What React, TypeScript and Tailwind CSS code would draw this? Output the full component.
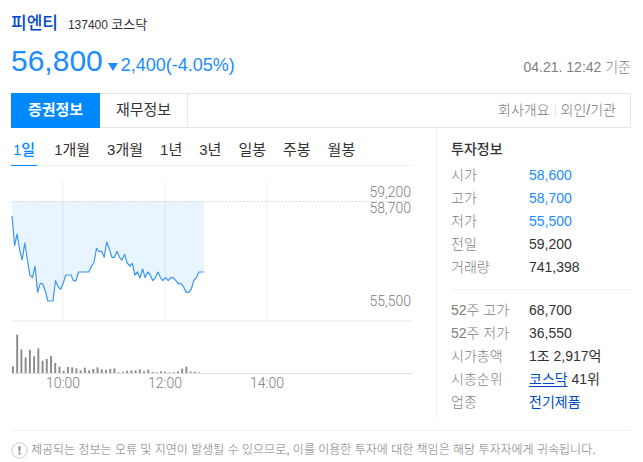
import React, { useState } from "react";

const PERIODS = ["1일", "1개월", "3개월", "1년", "3년", "일봉", "주봉", "월봉"];

// Line heights in a third of a viewBox unit, one point every 3 minutes from 09:00.
const LINE = [
  138, 227, 192, 240, 270, 219, 270, 315, 323, 289, 367, 341, 341, 364, 393, 393, 393, 332, 350,
  358, 340, 315, 315, 315, 332, 332, 306, 306, 306, 306, 306, 289, 279, 235, 244, 244, 262, 216,
  236, 262, 262, 244, 262, 270, 253, 279, 288, 280, 315, 306, 324, 297, 323, 306, 315, 332, 323,
  306, 323, 332, 323, 332, 323, 323, 332, 341, 341, 350, 367, 367, 358, 332, 323, 306, 306, 306,
];

// Traded volume, one bar every 5 minutes.
const VOLUME = [
  20, 115, 71, 47, 70, 50, 74, 37, 42, 51, 30, 19, 7, 18, 17, 14, 8, 16, 8, 12, 17, 11, 9, 12, 14,
  2, 3, 7, 8, 8, 11, 5, 10, 3, 2, 5, 4, 2, 2, 5, 13, 19, 4, 4, 2,
];

const HOURS = [
  { label: "10:00", x: 52 },
  { label: "12:00", x: 154 },
  { label: "14:00", x: 256 },
];

function PriceChart() {
  const top = 25;
  const points = LINE.map((v, i) => `${(1 + i * 2.56).toFixed(1)},${(v / 3 - 6).toFixed(1)}`);
  const endX = 1 + (LINE.length - 1) * 2.56;

  return (
    <svg viewBox="0 0 402 216" className="block w-full font-[Roboto,sans-serif] text-[14px]" role="img" aria-label="피엔티 1일 주가">
      {HOURS.map((h) => (
        <rect key={h.x} x={h.x - 1} y="5" width="2" height="140" fill="#f7f7f7" />
      ))}
      <path d={`M1,${top} L${points.join(" L")} L${endX},${top} Z`} fill="#0080ff" fillOpacity="0.09" />
      <path d={`M1,${top}.5 H399`} stroke="#d8d8d8" strokeWidth="1" strokeDasharray="2 1.5" />
      <path d={`M${points.join(" L")}`} fill="none" stroke="#3b97f0" strokeWidth="1.2" strokeLinejoin="round" />
      <rect x="1" y="144" width="400" height="2" fill="#f5f5f5" />
      {VOLUME.map((v, i) => (
        <rect key={i} x={1 + i * 4.23} y={197 - v / 3} width="1.9" height={v / 3} fill="#8a8a8a" />
      ))}
      <rect x="1" y="197" width="400" height="1" fill="#e2e2e2" />
      <g fill="#7d7d7d" textAnchor="end" fontWeight="300">
        <text x="400" y="21">59,200</text>
        <text x="400" y="37">58,700</text>
        <text x="400" y="130">55,500</text>
      </g>
      <g fill="#7d7d7d" textAnchor="middle" fontWeight="300">
        {HOURS.map((h) => (
          <text key={h.label} x={h.x} y="212">{h.label}</text>
        ))}
      </g>
    </svg>
  );
}

function Row({ name, children }: { name: string; children: React.ReactNode }) {
  return (
    <tr className="h-[23px]">
      <th scope="row" className="w-[78px] p-0 text-left font-light text-[#808080]">{name}</th>
      <td className="p-0">{children}</td>
    </tr>
  );
}

export default function App() {
  const [period, setPeriod] = useState("1일");

  return (
    <main className="bg-white pl-[11px] pr-3 pt-[13px] font-['Liberation_Sans','Noto_Sans_CJK_KR',sans-serif] text-[14px] text-[#333]">
      <header>
        <div className="flex h-[22px] items-baseline gap-[10px]">
          <h1 className="text-[17px] font-medium leading-[22px]">
            <a href="#stock" className="text-[#0048cc]">피엔티</a>
          </h1>
          <span className="text-[12px] leading-[22px]">
            137400 <span className="text-[13px]">코스닥</span>
          </span>
        </div>
        <div className="flex items-center justify-between text-[#1a8cff]">
          <div className="flex items-baseline">
            <strong className="text-[30px] font-normal leading-[52px]">56,800</strong>
            <svg viewBox="0 0 10 8" className="ml-[5px] mr-[3px] h-2 w-[10px]" aria-label="하락">
              <path d="M0 0h10L5 8z" fill="currentColor" />
            </svg>
            <span className="text-[18px]">2,400(-4.05%)</span>
          </div>
          <span className="pt-3 font-light text-[#808080]">04.21. 12:42 기준</span>
        </div>
      </header>

      <nav className="mt-[6px] flex h-[35px] items-stretch border border-[#e5e5e5] text-[15px]">
        <button className="-my-px -ml-px w-[89px] bg-[#0089ff] font-bold text-white">증권정보</button>
        <button className="w-[88px] border-r border-[#e5e5e5]">재무정보</button>
        <div className="ml-auto mr-[14px] flex items-center text-[14px] font-light text-[#777]">
          <a href="#company">회사개요</a>
          <span className="mx-[5px] h-[11px] w-px bg-[#e0e0e0]" />
          <a href="#investors">외인/기관</a>
        </div>
      </nav>

      <div className="flex">
        <section className="min-w-0 flex-1 pr-[23px]">
          <div className="flex h-[38px] gap-[17px] border-b border-[#f0f0f0] text-[15px]">
            {PERIODS.map((p) => (
              <button
                key={p}
                onClick={() => setPeriod(p)}
                className={
                  p === period
                    ? "-mb-px border-b border-[#0089ff] px-[2px] pt-[7px] font-medium text-[#0089ff]"
                    : "-mb-px border-b border-transparent pt-[7px]"
                }
              >
                {p}
              </button>
            ))}
          </div>
          <div className="mt-[10px]">
            <PriceChart />
          </div>
        </section>

        <aside className="w-[195px] border-l border-[#f0f0f0] pb-1 pl-[14px] pt-[10px]">
          <h2 className="h-[26px] text-[14px] font-medium leading-[22px]">투자정보</h2>
          <table className="w-full border-collapse leading-[23px]">
            <tbody>
              <Row name="시가"><span className="text-[#1a8cff]">58,600</span></Row>
              <Row name="고가"><span className="text-[#1a8cff]">58,700</span></Row>
              <Row name="저가"><span className="text-[#1a8cff]">55,500</span></Row>
              <Row name="전일">59,200</Row>
              <Row name="거래량">741,398</Row>
            </tbody>
          </table>
          <table className="mt-[10px] w-full border-separate border-spacing-0 border-t border-[#f0f0f0] pt-[9px] leading-[23px]">
            <tbody>
              <Row name="52주 고가">68,700</Row>
              <Row name="52주 저가">36,550</Row>
              <Row name="시가총액">1조 2,917억</Row>
              <Row name="시총순위">
                <a href="#kosdaq" className="text-[#0048cc] underline underline-offset-2">코스닥</a> 41위
              </Row>
              <Row name="업종">
                <a href="#sector" className="text-[#0048cc]">전기제품</a>
              </Row>
            </tbody>
          </table>
        </aside>
      </div>

      <footer className="mt-3 flex items-center gap-[3px] border-t border-[#eee] pt-[11px] text-[12px] font-light text-[#777]">
        <svg viewBox="0 0 17 17" className="size-[17px] shrink-0" fill="none" aria-hidden="true">
          <circle cx="8.5" cy="8.5" r="7.7" stroke="#ccc" strokeWidth="1" />
          <path d="M7.3 4.5h2.4l-.4 5H7.7zM7.5 10.6h2v1.9h-2z" fill="#888" />
        </svg>
        <p className="leading-[17px]">
          제공되는 정보는 오류 및 지연이 발생될 수 있으므로, 이를 이용한 투자에 대한 책임은 해당 투자자에게 귀속됩니다.
        </p>
      </footer>
    </main>
  );
}
